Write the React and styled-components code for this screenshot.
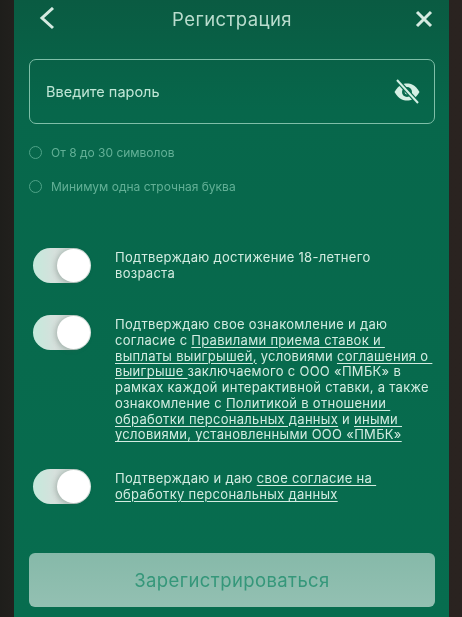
import React from "react";
import styled, { createGlobalStyle } from "styled-components";

const Global = createGlobalStyle`
  html, body { margin: 0; padding: 0; background: #26221f; }
  body { width: 462px; height: 617px; overflow: hidden; }
`;
const Screen = styled.div`
  width: 462px; height: 617px; box-sizing: border-box; padding: 0 13px 0 14px;
  background: linear-gradient(90deg, #1e1e1b 0%, #22201d 3%, #2a2320 100%);
  font-family: Inter, Roboto, sans-serif; overflow: hidden;
  filter: blur(0.45px);
`;
const Panel = styled.main`
  height: 617px; box-sizing: border-box; padding: 0 14px 0 15px;
  display: flex; flex-direction: column;
  background: linear-gradient(180deg, #0a5b42 0%, #07674b 18%, #076d4f 100%);
`;
const Header = styled.header`
  height: 37px; display: flex; align-items: center; justify-content: space-between;
  padding: 0 2px 0 9px;
`;
const HeaderIcon = styled.svg`
  width: 18px; height: 24px; fill: none; stroke: #d5eae1; stroke-width: 3;
`;
const Title = styled.h1`
  margin: 0 7px 0 0; font-size: 18.5px; font-weight: 400; letter-spacing: 0.4px; color: #b9dccd;
`;
const InputBox = styled.div`
  margin-top: 22px; height: 65px; box-sizing: border-box; padding: 0 14px 0 16px;
  display: flex; align-items: center; justify-content: space-between;
  border: 1.5px solid #7fbfa8; border-radius: 7px;
`;
const Placeholder = styled.span`
  font-size: 14.5px; color: #c0e6d6;
`;
const Hints = styled.ul`
  list-style: none; margin: 20px 0 0; padding: 0; display: flex; flex-direction: column; gap: 18px;
`;
const Hint = styled.li`
  height: 16px; display: flex; align-items: center; gap: 9px;
  font-size: 12px; color: #62b096;
`;
const HintDot = styled.span`
  width: 11px; height: 11px; border: 1.5px solid #4fa388; border-radius: 50%;
`;
const Consents = styled.section`
  margin-top: 54px; display: flex; flex-direction: column; gap: 26px;
`;
const Consent = styled.div`
  display: flex; gap: 24px; padding-left: 4px; min-height: 41px;
`;
const Toggle = styled.span`
  flex: none; width: 58px; height: 35px; border-radius: 18px; position: relative;
  background: linear-gradient(90deg, #c4eadc 0%, #d6e0dc 38%, #c2cfca 68%, #dfe9e5 100%);
`;
const Knob = styled.span`
  position: absolute; top: 1px; right: 1px; width: 33px; height: 33px; border-radius: 50%;
  background: #fff; box-shadow: -2px 1px 5px rgba(70, 90, 80, 0.28);
`;
const ConsentText = styled.p`
  margin: 2px 0 0; font-size: 13px; line-height: 15.75px; letter-spacing: 0.29px; color: #d3ece1;
  white-space: pre;
`;
const Link = styled.span`
  text-decoration: underline; text-underline-offset: 2px; text-decoration-thickness: 1px;
`;
const Submit = styled.button`
  margin-top: 43px; height: 54px; width: 100%; border: 0; border-radius: 6px;
  background: linear-gradient(180deg, #86b9a9 0%, #93c0b2 100%); color: #35977a;
  font-family: inherit; font-size: 18.5px; letter-spacing: 0.4px;
`;

const EyeOff = () => (
  <svg width="26" height="26" viewBox="0 0 26 26">
    <path d="M0.5 13 C5 5.5 9 4.5 13 4.5 C17 4.5 21 5.5 25.5 13 C21 20.5 17 21.5 13 21.5 C9 21.5 5 20.5 0.5 13Z" fill="#d5efe4" />
    <circle cx="13" cy="13" r="5" fill="#086a4d" />
    <circle cx="13" cy="13" r="2.4" fill="#d5efe4" />
    <path d="M3 1 L24 24" stroke="#086a4d" strokeWidth="4.5" />
    <path d="M3 1 L24 24" stroke="#d5efe4" strokeWidth="2" />
  </svg>
);

const rows = [
  <>Подтверждаю достижение 18-летнего{"\n"}возраста</>,
  <>
    Подтверждаю свое ознакомление и даю{"\n"}согласие с <Link>Правилами приема ставок и </Link>{"\n"}
    <Link>выплаты выигрышей,</Link> условиями <Link>соглашения о </Link>{"\n"}
    <Link>выигрыше </Link>заключаемого с ООО «ПМБК» в{"\n"}рамках каждой интерактивной ставки, а также{"\n"}
    ознакомление с <Link>Политикой в отношении </Link>{"\n"}
    <Link>обработки персональных данных</Link> и <Link>иными </Link>{"\n"}
    <Link>условиями, установленными ООО «ПМБК»</Link>
  </>,
  <>Подтверждаю и даю <Link>свое согласие на </Link>{"\n"}<Link>обработку персональных данных</Link></>,
];

export default function App() {
  return (
    <Screen>
      <Global />
      <Panel>
        <Header>
          <HeaderIcon viewBox="0 0 18 24"><path d="M15 1 L4 11 L15 21" /></HeaderIcon>
          <Title>Регистрация</Title>
          <HeaderIcon viewBox="0 0 18 24"><path d="M2 5 L16 19 M16 5 L2 19" /></HeaderIcon>
        </Header>
        <InputBox>
          <Placeholder>Введите пароль</Placeholder>
          <EyeOff />
        </InputBox>
        <Hints>
          <Hint><HintDot />От 8 до 30 символов</Hint>
          <Hint><HintDot />Минимум одна строчная буква</Hint>
        </Hints>
        <Consents>
          {rows.map((r, i) => (
            <Consent key={i}>
              <Toggle><Knob /></Toggle>
              <ConsentText>{r}</ConsentText>
            </Consent>
          ))}
        </Consents>
        <Submit>Зарегистрироваться</Submit>
      </Panel>
    </Screen>
  );
}
